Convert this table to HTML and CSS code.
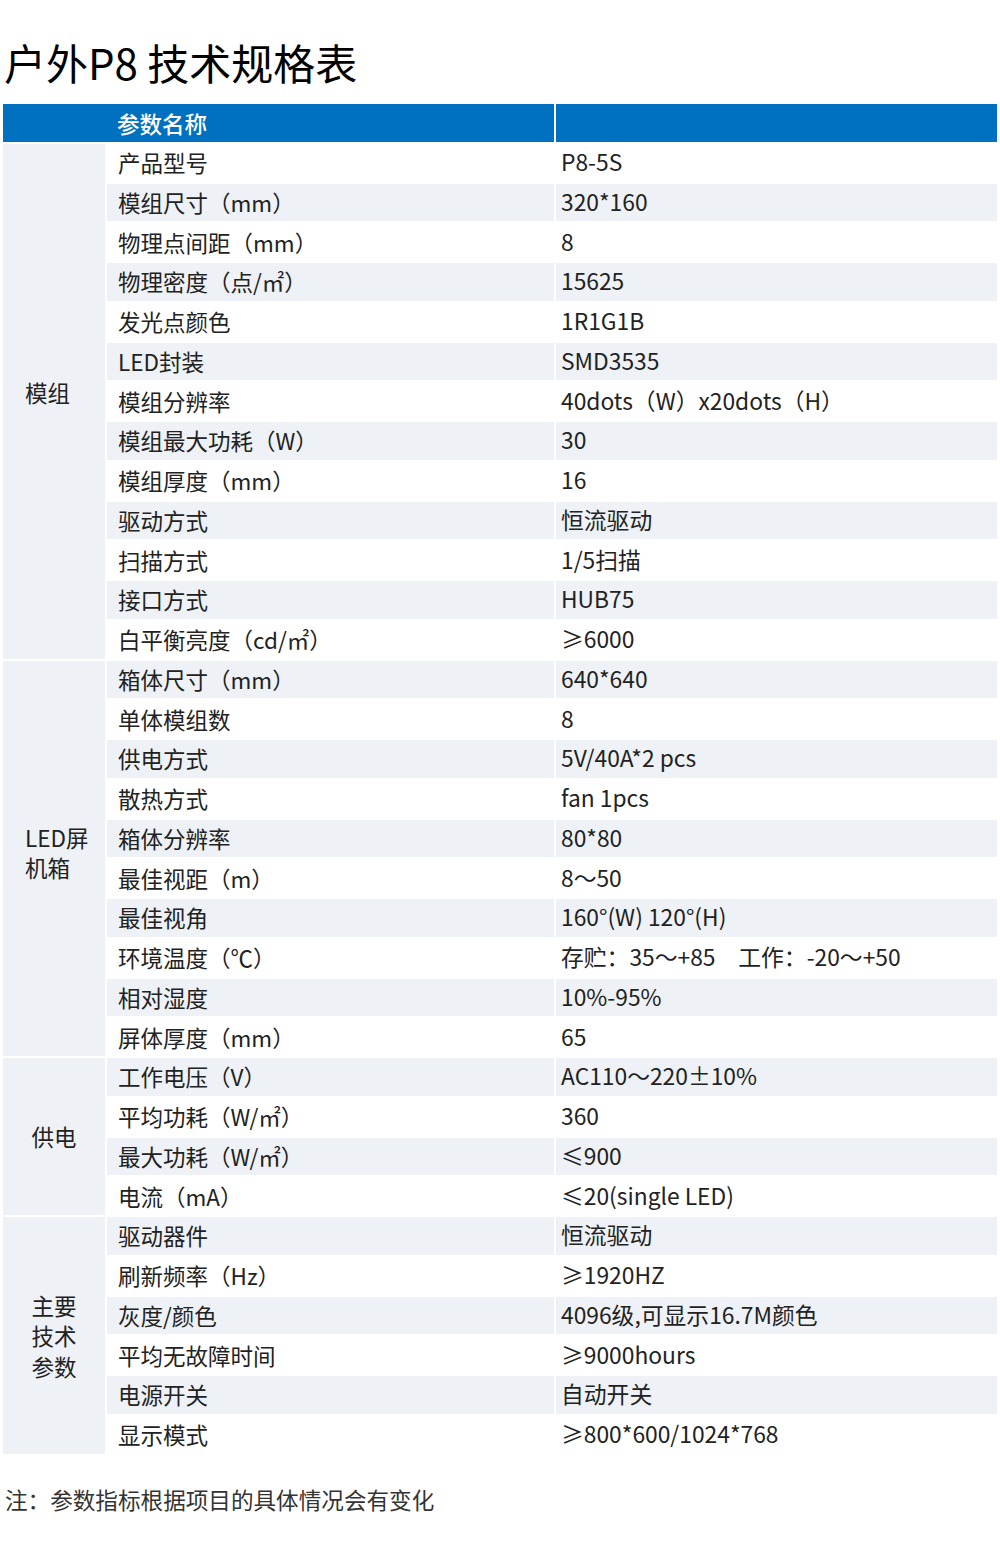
FILE: index.html
```html
<!DOCTYPE html>
<html lang="zh-CN">
<head>
<meta charset="utf-8">
<title>户外P8 技术规格表</title>
<link rel="stylesheet" href="styles.css">
</head>
<body>
<h1 class="title">户外P8 技术规格表</h1>
<table class="spec">
  <colgroup><col class="c1"><col class="c2"><col class="c3"></colgroup>
  <thead>
    <tr class="head"><th colspan="2" class="h-name">参数名称</th><th class="h-val"></th></tr>
  </thead>
  <tbody>
    <tr><td rowspan="13" class="cat cat-left cat-a">模组</td><td class="k">产品型号</td><td class="v">P8-5S</td></tr>
    <tr class="alt"><td class="k">模组尺寸（mm）</td><td class="v">320*160</td></tr>
    <tr><td class="k">物理点间距（mm）</td><td class="v">8</td></tr>
    <tr class="alt"><td class="k">物理密度（点/㎡）</td><td class="v">15625</td></tr>
    <tr><td class="k">发光点颜色</td><td class="v">1R1G1B</td></tr>
    <tr class="alt"><td class="k">LED封装</td><td class="v">SMD3535</td></tr>
    <tr><td class="k">模组分辨率</td><td class="v">40dots（W）x20dots（H）</td></tr>
    <tr class="alt"><td class="k">模组最大功耗（W）</td><td class="v">30</td></tr>
    <tr><td class="k">模组厚度（mm）</td><td class="v">16</td></tr>
    <tr class="alt"><td class="k">驱动方式</td><td class="v">恒流驱动</td></tr>
    <tr><td class="k">扫描方式</td><td class="v">1/5扫描</td></tr>
    <tr class="alt"><td class="k">接口方式</td><td class="v">HUB75</td></tr>
    <tr><td class="k">白平衡亮度（cd/㎡）</td><td class="v">≥6000</td></tr>

    <tr class="alt"><td rowspan="10" class="cat cat-left cat-b">LED屏<br>机箱</td><td class="k">箱体尺寸（mm）</td><td class="v">640*640</td></tr>
    <tr><td class="k">单体模组数</td><td class="v">8</td></tr>
    <tr class="alt"><td class="k">供电方式</td><td class="v">5V/40A*2 pcs</td></tr>
    <tr><td class="k">散热方式</td><td class="v">fan 1pcs</td></tr>
    <tr class="alt"><td class="k">箱体分辨率</td><td class="v">80*80</td></tr>
    <tr><td class="k">最佳视距（m）</td><td class="v">8～50</td></tr>
    <tr class="alt"><td class="k">最佳视角</td><td class="v">160°(W) 120°(H)</td></tr>
    <tr><td class="k">环境温度（℃）</td><td class="v">存贮：35～+85&emsp;工作：-20～+50</td></tr>
    <tr class="alt"><td class="k">相对湿度</td><td class="v">10%-95%</td></tr>
    <tr><td class="k">屏体厚度（mm）</td><td class="v">65</td></tr>

    <tr class="alt"><td rowspan="4" class="cat">供电</td><td class="k">工作电压（V）</td><td class="v">AC110～220±10%</td></tr>
    <tr><td class="k">平均功耗（W/㎡）</td><td class="v">360</td></tr>
    <tr class="alt"><td class="k">最大功耗（W/㎡）</td><td class="v">≤900</td></tr>
    <tr><td class="k">电流（mA）</td><td class="v">≤20(single LED)</td></tr>

    <tr class="alt"><td rowspan="6" class="cat">主要<br>技术<br>参数</td><td class="k">驱动器件</td><td class="v">恒流驱动</td></tr>
    <tr><td class="k">刷新频率（Hz）</td><td class="v">≥1920HZ</td></tr>
    <tr class="alt"><td class="k">灰度/颜色</td><td class="v">4096级,可显示16.7M颜色</td></tr>
    <tr><td class="k">平均无故障时间</td><td class="v">≥9000hours</td></tr>
    <tr class="alt"><td class="k">电源开关</td><td class="v">自动开关</td></tr>
    <tr><td class="k">显示模式</td><td class="v">≥800*600/1024*768</td></tr>
  </tbody>
</table>
<p class="note">注：参数指标根据项目的具体情况会有变化</p>
</body>
</html>
```

FILE: styles.css
```css
html, body {
  margin: 0;
  padding: 0;
  background: #ffffff;
}

body {
  font-family: "Noto Sans CJK SC", "Noto Sans", sans-serif;
  color: #222222;
}

.title {
  margin: 0;
  padding: 34px 0 0 4px;
  font-size: 42px;
  line-height: 56px;
  font-weight: normal;
  color: #000000;
}

.spec {
  margin: 14px 0 0 3px;
  width: 994px;
  table-layout: fixed;
  border-collapse: separate;
  border-spacing: 0;
  font-size: 22.5px;
}

.c1 { width: 104px; }
.c2 { width: 449px; }
.c3 { width: 441px; }

.spec th,
.spec td {
  box-sizing: border-box;
  height: 39.75px;
  padding: 0;
  border-right: 2px solid #ffffff;
  border-bottom: 2px solid #ffffff;
  vertical-align: middle;
  text-align: left;
  white-space: nowrap;
  line-height: 30px;
}

.spec th:last-child,
.spec td:last-child {
  border-right: 0;
}

.spec .head th {
  background: #0070c0;
  color: #ffffff;
  font-weight: 500;
}

.spec th.h-name {
  padding-left: 114px;
}

.spec td.k {
  padding-left: 11px;
  padding-bottom: 1px;
}

.spec td.v {
  padding-left: 5px;
  padding-bottom: 1px;
  font-size: 22.8px;
}

.spec .alt td {
  background: #eef1f6;
}

.spec td.cat {
  background: #eef1f6;
  text-align: center;
  line-height: 30.5px;
  white-space: normal;
  font-size: 22.5px;
}

.spec td.cat-left {
  text-align: left;
  padding-left: 22px;
}

.spec td.cat-a {
  padding-bottom: 18px;
}

.spec td.cat-b {
  padding-bottom: 12px;
}

.note {
  margin: 29px 0 0 5px;
  font-size: 22.6px;
  line-height: 30px;
  color: #333333;
}
```
